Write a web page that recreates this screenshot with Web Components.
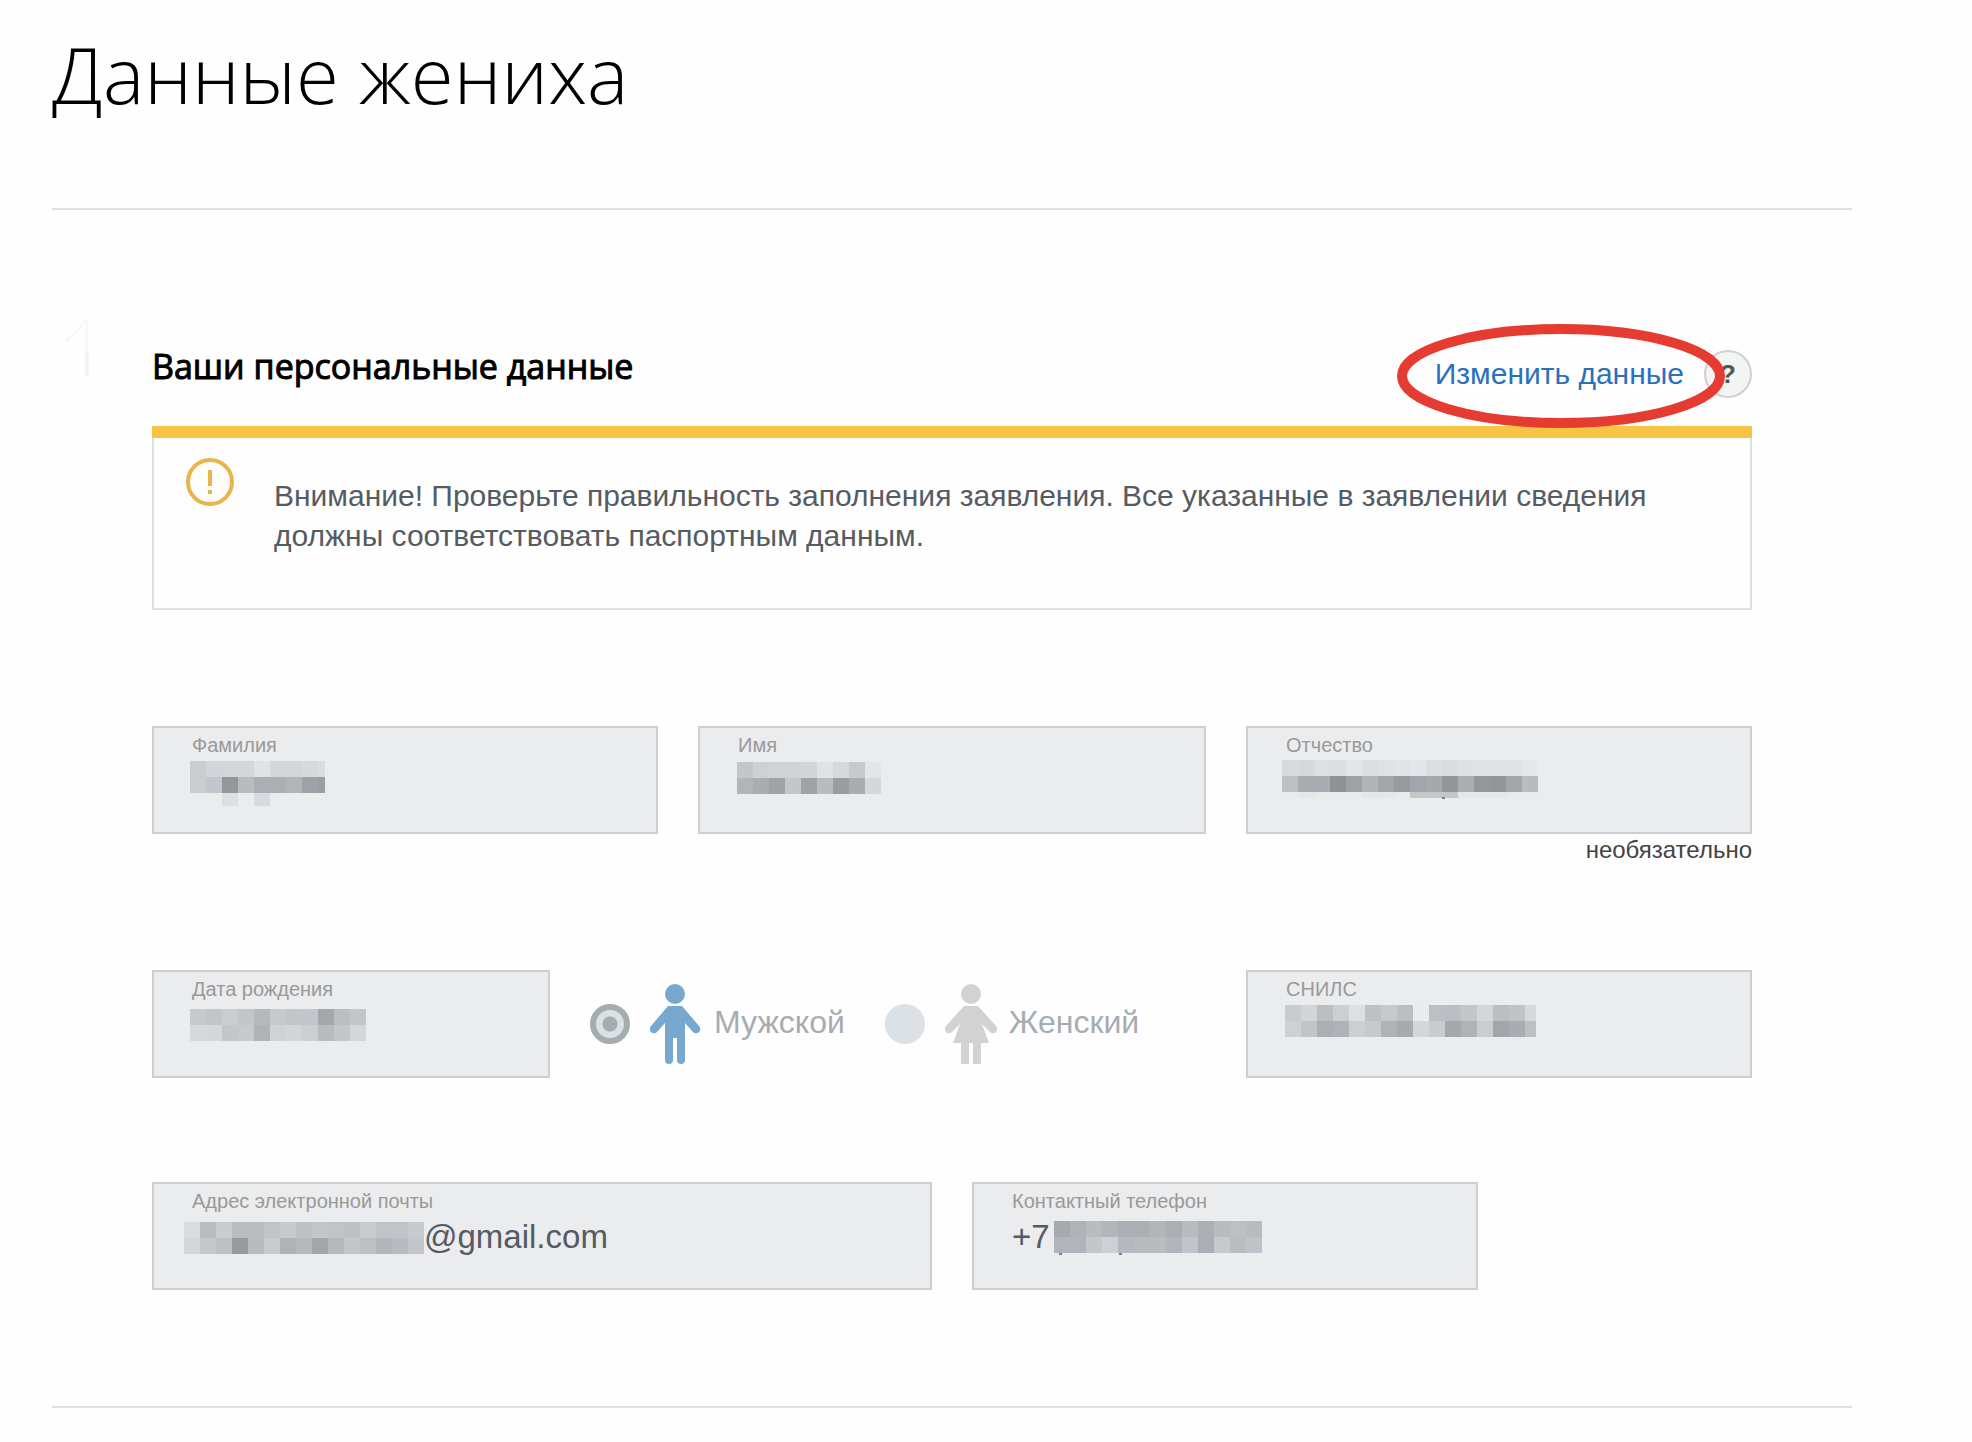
<!DOCTYPE html>
<html lang="ru">
<head>
<meta charset="UTF-8">
<meta name="viewport" content="width=device-width, initial-scale=1">
<title>Данные жениха</title>
<style>
  body {
    margin: 0;
    background: #fefefe;
    color: #555b63;
    font-family: "Liberation Sans", Arial, sans-serif;
  }
</style>
</head>
<body>
<form-page heading="Данные жениха">
  <form-section heading="Ваши персональные данные" action="Изменить данные">
    <notice-box>Внимание! Проверьте правильность заполнения заявления. Все указанные в заявлении сведения должны соответствовать паспортным данным.</notice-box>

    <field-row class="names">
      <data-field label="Фамилия"><pixel-mask slot="mask" name="surname"></pixel-mask></data-field>
      <data-field label="Имя"><pixel-mask slot="mask" name="first"></pixel-mask></data-field>
      <data-field label="Отчество" hint="необязательно"><pixel-mask slot="mask" name="patronymic"></pixel-mask></data-field>
    </field-row>

    <field-row class="birth">
      <data-field label="Дата рождения"><pixel-mask slot="mask" name="birth"></pixel-mask></data-field>
      <gender-choice></gender-choice>
      <data-field label="СНИЛС"><pixel-mask slot="mask" name="snils"></pixel-mask></data-field>
    </field-row>

    <field-row class="contacts">
      <data-field class="email" label="Адрес электронной почты" value="@gmail.com"><pixel-mask slot="mask" name="email"></pixel-mask></data-field>
      <data-field label="Контактный телефон" value="+7"><pixel-mask slot="mask" name="phone"></pixel-mask></data-field>
    </field-row>
  </form-section>
</form-page>

<script>
class FormPage extends HTMLElement {
  constructor() {
    super();
    this.attachShadow({ mode: 'open' });
  }

  connectedCallback() {
    this.shadowRoot.innerHTML = `
      <style>
        :host { display: block; padding: 20px 120px 32px 52px; }
        h1 {
          margin: 0;
          padding-bottom: 80px;
          color: #000;
          font: 300 78px/108px "Open Sans", "Noto Sans", sans-serif;
        }
        main {
          border-top: 2px solid #dce0e4;
          border-bottom: 2px solid #dce0e4;
        }
      </style>
      <h1>${this.getAttribute('heading')}</h1>
      <main><slot></slot></main>
    `;
  }
}
customElements.define('form-page', FormPage);

class FormSection extends HTMLElement {
  constructor() {
    super();
    this.attachShadow({ mode: 'open' });
  }

  connectedCallback() {
    this.shadowRoot.innerHTML = `
      <style>
        :host {
          display: grid;
          grid-template-columns: 100px 1fr;
          padding: 104px 100px 116px 0;
        }
        .step { width: 44px; height: 76px; }
        header {
          display: flex;
          align-items: flex-start;
          justify-content: space-between;
          padding-bottom: 28px;
        }
        h2 {
          margin: 0;
          padding-top: 28px;
          color: #000;
          font: 400 34px/48px "Open Sans", "Noto Sans", sans-serif;
          -webkit-text-stroke: 1px #000;
        }
        .tools { display: flex; align-items: center; gap: 20px; padding-top: 36px; }
        .edit { position: relative; }
        a { color: #2a70bd; font-size: 30px; line-height: 48px; text-decoration: none; }
        .ring {
          position: absolute;
          top: 50%;
          left: 50%;
          width: 340px;
          height: 112px;
          transform: translate(-50%, -50%);
          pointer-events: none;
          z-index: 1;
        }
        button {
          width: 48px;
          height: 48px;
          padding: 0;
          border: 2px solid #cdd0d6;
          border-radius: 50%;
          background: #f3f5f5;
          color: #555;
          font: bold 26px/44px "Liberation Sans", Arial, sans-serif;
        }
      </style>
      <svg class="step" viewBox="0 0 44 76" aria-hidden="true">
        <path d="M15 26 35 6V62" fill="none" stroke="#f8f8f9" stroke-width="2"/>
        <path d="M35 37V62" stroke="#f0f0f1" stroke-width="3"/>
        <circle cx="15" cy="26" r="2" fill="#f3f3f4"/>
      </svg>
      <div>
        <header>
          <h2>${this.getAttribute('heading')}</h2>
          <div class="tools">
            <span class="edit">
              <a href="#edit">${this.getAttribute('action')}</a>
              <svg class="ring" viewBox="0 0 340 112" aria-hidden="true">
                <ellipse cx="172" cy="58" rx="159" ry="47" fill="none" stroke="#e53b30" stroke-width="10"/>
              </svg>
            </span>
            <button type="button">?</button>
          </div>
        </header>
        <slot></slot>
      </div>
    `;
  }
}
customElements.define('form-section', FormSection);

class NoticeBox extends HTMLElement {
  constructor() {
    super();
    this.attachShadow({ mode: 'open' });
    this.shadowRoot.innerHTML = `
      <style>
        :host { display: block; border-top: 12px solid #f7c446; }
        .body {
          display: flex;
          align-items: flex-start;
          gap: 40px;
          padding: 20px 72px 40px 32px;
          border: 2px solid #dce0e4;
          border-top: 0;
        }
        svg { flex: none; width: 48px; height: 48px; }
        p { margin: 0; padding: 18px 0 12px; font-size: 30px; line-height: 40px; }
      </style>
      <div class="body">
        <svg viewBox="0 0 48 48" fill="#e9b44b" aria-hidden="true">
          <circle cx="24" cy="24" r="22" fill="none" stroke="#e9b44b" stroke-width="4"/>
          <path d="M22 12h4v16h-4zM22 32h4v4h-4z"/>
        </svg>
        <p><slot></slot></p>
      </div>
    `;
  }
}
customElements.define('notice-box', NoticeBox);

class FieldRow extends HTMLElement {
  constructor() {
    super();
    this.attachShadow({ mode: 'open' });
    this.shadowRoot.innerHTML = `
      <style>
        :host { display: grid; column-gap: 40px; align-items: start; }
        :host(.names) { grid-template-columns: 506fr 508fr 506fr; margin-top: 116px; }
        :host(.birth) { grid-template-columns: 398fr 616fr 506fr; margin-top: 136px; }
        :host(.contacts) { grid-template-columns: 780fr 506fr 234fr; margin-top: 104px; }
      </style>
      <slot></slot>
    `;
  }
}
customElements.define('field-row', FieldRow);

class DataField extends HTMLElement {
  constructor() {
    super();
    this.attachShadow({ mode: 'open' });
  }

  connectedCallback() {
    const value = this.getAttribute('value') || '';
    const hint = this.getAttribute('hint');

    this.shadowRoot.innerHTML = `
      <style>
        :host { display: block; min-width: 0; }
        .box {
          position: relative;
          box-sizing: border-box;
          height: 108px;
          padding: 5px 38px;
          border: 2px solid #cbcfd3;
          background: #ebeced;
        }
        label { display: block; color: #999; font-size: 20px; line-height: 24px; }
        input {
          display: block;
          box-sizing: border-box;
          width: 100%;
          height: 48px;
          padding: 0;
          border: 0;
          background: none;
          color: #555b63;
          font: 33px/48px "Liberation Sans", Arial, sans-serif;
        }
        :host(.email) input { padding-left: 232px; }
        ::slotted(pixel-mask) { position: absolute; inset: -2px; }
        .hint {
          display: block;
          height: 32px;
          margin-bottom: -32px;
          color: #444;
          font-size: 24px;
          line-height: 32px;
          text-align: right;
        }
      </style>
      <div class="box">
        <label for="value">${this.getAttribute('label')}</label>
        <input id="value" type="text" value="${value}" readonly>
        <slot name="mask"></slot>
      </div>
      ${hint ? `<span class="hint">${hint}</span>` : ''}
    `;
  }
}
customElements.define('data-field', DataField);

// Пиксельная маска: x, y - начало, rows - цвета клеток 16x16, "-" - пустая клетка
const CELL = 16;
const MASKS = {
  surname: {
    x: 38, y: 35, width: 135, height: 45,
    rows: [
      'c9cdd0 d3d5da d3d7da d3d6da e0e2e6 d3d6da d3d7da d7d9dc dadcdf',
      'c9cdd0 c3c6cd 92979b b8bbc0 abaeb4 abaeb3 b1b5ba a0a1a8 9b9ca4',
      '- - dddfe3 - d7dbde'
    ]
  },
  first: {
    x: 39, y: 36, width: 144, height: 32,
    rows: [
      'c3c7ca cdd1d4 cfd3d6 cfd3d6 d3d5d9 e1e2e5 d6d8dd c6cacd e3e5e9',
      'b1b4b9 a9acb1 9fa2a7 c3c7ca 9fa2a7 b8bcbf 9a9ca2 a9acb1 d5d8db'
    ]
  },
  patronymic: {
    x: 36, y: 34, width: 256, height: 38,
    rows: [
      'd8dadd d5d9dc dddfe2 dcdee1 e3e5e9 dbdfe2 dfe1e4 e2e3e8 e5e6ea dbdfe1 d9dbde dfe0e3 e0e1e4 e1e2e5 e1e2e5 e6e7ea',
      'bcc0c3 a9acb1 a9acb2 8c9296 9ea1a6 b0b4b7 a3a5ab 989a9f a3a5ac a5a8ad 90969b abadb3 95979d 91969a a3a5ab b9bcbf',
      'e9eaec e5e7e9 e9eaec e9eaec e9eaec e4e6e9 e5e7e9 e9eaec c4c8cb c4c8cb c3c7ca e5e7e9 e6e7ea e6e7ea e9eaec e9eaec'
    ],
    specks: [[160, 37]]
  },
  birth: {
    x: 38, y: 39, width: 176, height: 32,
    rows: [
      'c6cacd c2c6c9 cacdd1 c2c6c9 b5b9be c6cacd c2c6c9 c3c6cc a3a8ad bbbfc2 c3c7ca',
      'd5d8dc d5d7db c3c7ca c6cacd afb2b7 cfd2d6 d3d5da cbcfd2 b8bcbf c3c7ca d3d7da'
    ]
  },
  snils: {
    x: 39, y: 35, width: 251, height: 32,
    rows: [
      'c8ccd0 d3d5da bbbfc2 cbcfd3 dce0e3 bdc1c4 c6cacd bbbfc2 e8eced bcc0c3 bcbec5 c3c7ca d3d7da bbbfc2 bfc3c8 d6d8dd',
      'cdd1d4 c1c5c8 abaeb4 afb2b7 cbcfd3 c6cacd afb2b7 a7aaaf d3d7da c8ccd0 a2a8ac afb3b6 cacdd1 a3a5ab a9acb2 bcc0c3'
    ]
  },
  email: {
    x: 32, y: 40, width: 240, height: 32,
    rows: [
      'dbdcdf b9bdc0 c8cccf b9bdc0 b9bdc0 c0c4c7 c6cacd bdc1c4 c2c6c9 c0c4c7 bcc0c3 c8cccf c0c4c7 c0c4ca c6c9ce',
      'd3d7da c4c8cb bdc1c4 979a9f b8bbc2 c8ccd0 afb2b7 b5b8bd a3a5ab b5b8be c3c7ca bcc0c4 b2b5bc b8bcc1 c3c7cc'
    ]
  },
  phone: {
    x: 82, y: 39, width: 208, height: 32,
    rows: [
      'a5aaae afb3b6 b8bcbf b2b6bb abaeb4 abaeb3 b2b5ba abaeb3 b8bcbf abb0b4 b8bcbf bcc0c3 b8bcbf',
      'b1b4ba b1b4ba c3c7ca cdd1d5 b5b8be b8bbbf b8bcbf b1b4ba c1c4cb abaeb4 c6cacd b9bdc0 bfc2c8'
    ],
    specks: [[5, 32], [65, 32]]
  }
};

class PixelMask extends HTMLElement {
  constructor() {
    super();
    this.attachShadow({ mode: 'open' });
  }

  connectedCallback() {
    const mask = MASKS[this.getAttribute('name')];

    const cells = mask.rows.map((row, r) => row.split(' ').map((color, c) => {
      if (color === '-') return '';
      const w = Math.min(CELL, mask.width - c * CELL);
      const h = Math.min(CELL, mask.height - r * CELL);
      return `<rect x="${mask.x + c * CELL}" y="${mask.y + r * CELL}" width="${w}" height="${h}" fill="#${color}"/>`;
    }).join('')).join('');

    const specks = (mask.specks || []).map(([x, y]) =>
      `<rect x="${mask.x + x}" y="${mask.y + y}" width="3" height="2" fill="#7b8086"/>`
    ).join('');

    this.shadowRoot.innerHTML = `
      <style>
        :host { display: block; pointer-events: none; }
        svg { display: block; width: 100%; height: 100%; }
      </style>
      <svg shape-rendering="crispEdges" aria-hidden="true">${cells}${specks}</svg>
    `;
  }
}
customElements.define('pixel-mask', PixelMask);

class GenderChoice extends HTMLElement {
  constructor() {
    super();
    this.attachShadow({ mode: 'open' });
    this.shadowRoot.innerHTML = `
      <style>
        :host { display: flex; align-items: center; gap: 40px; height: 108px; }
        label {
          display: flex;
          align-items: center;
          color: #a6adb1;
          font-size: 32px;
          line-height: 40px;
        }
        input {
          appearance: none;
          flex: none;
          width: 40px;
          height: 40px;
          margin: 0 20px 0 0;
          border-radius: 50%;
          background: #dce1e5;
        }
        input:checked {
          border: 6px solid #a5adb1;
          background: radial-gradient(circle, #a5adb1 7px, #dce1e5 8px);
        }
        svg { flex: none; width: 52px; height: 82px; margin-right: 12px; }
        span { padding-bottom: 4px; }
      </style>
      <label>
        <input type="radio" name="gender" value="male" checked>
        <svg viewBox="0 0 52 82" fill="#79a8cf" aria-hidden="true">
          <circle cx="25" cy="11" r="10"/>
          <path d="M18 23H32L49 43A4 4 0 0 1 43 49L35 40V77A4 4 0 0 1 27 77V55H23V77A4 4 0 0 1 15 77V40L7 49A4 4 0 0 1 1 43Z"/>
        </svg>
        <span>Мужской</span>
      </label>
      <label>
        <input type="radio" name="gender" value="female">
        <svg viewBox="0 0 52 82" fill="#d2d2d2" aria-hidden="true">
          <circle cx="26" cy="11" r="10"/>
          <path d="M19 23H33L51 43A4 4 0 0 1 45 49L37 41 44 60H36V81H28V60H24V81H16V60H8L15 41 7 49A4 4 0 0 1 1 43Z"/>
        </svg>
        <span>Женский</span>
      </label>
    `;
  }
}
customElements.define('gender-choice', GenderChoice);
</script>
</body>
</html>
